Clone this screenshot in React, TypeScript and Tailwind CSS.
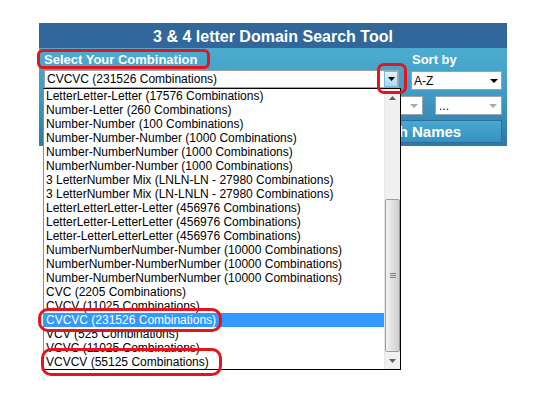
import React from "react";

const items = [
  "LetterLetter-Letter (17576 Combinations)",
  "Number-Letter (260 Combinations)",
  "Number-Number (100 Combinations)",
  "Number-Number-Number (1000 Combinations)",
  "Number-NumberNumber (1000 Combinations)",
  "NumberNumber-Number (1000 Combinations)",
  "3 LetterNumber Mix (LNLN-LN - 27980 Combinations)",
  "3 LetterNumber Mix (LN-LNLN - 27980 Combinations)",
  "LetterLetterLetter-Letter (456976 Combinations)",
  "LetterLetter-LetterLetter (456976 Combinations)",
  "Letter-LetterLetterLetter (456976 Combinations)",
  "NumberNumberNumber-Number (10000 Combinations)",
  "NumberNumber-NumberNumber (10000 Combinations)",
  "Number-NumberNumberNumber (10000 Combinations)",
  "CVC (2205 Combinations)",
  "CVCV (11025 Combinations)",
  "CVCVC (231526 Combinations)",
  "VCV (525 Combinations)",
  "VCVC (11025 Combinations)",
  "VCVCV (55125 Combinations)",
];

function Tri({ color = "#000", w = 8, h = 4 }: { color?: string; w?: number; h?: number }) {
  return (
    <svg width={w} height={h} viewBox={`0 0 ${w} ${h}`}>
      <polygon points={`0,0 ${w},0 ${w / 2},${h}`} fill={color} />
    </svg>
  );
}

export default function App() {
  return (
    <div
      className="relative w-[550px] h-[400px] bg-white overflow-hidden"
      style={{ fontFamily: '"Liberation Sans", Arial, sans-serif' }}
    >
      <div className="pt-[23px] pl-[39px]">
        <div className="w-[468px]">
          {/* header */}
          <div className="h-[25px] bg-[#31679a] flex items-center justify-center text-white font-bold text-[16px] leading-none pt-[2px]">
            3 &amp; 4 letter Domain Search Tool
          </div>
          {/* panel */}
          <div className="h-[98px] bg-gradient-to-b from-[#4caccf] via-[#4099c4] to-[#2f78a6] pl-[5px] pt-[2px]">
            <div className="grid grid-cols-[355px_91px] gap-x-[12px]">
              <div className="text-white font-bold text-[13px] leading-[20px]">Select Your Combination</div>
              <div className="text-white font-bold text-[13px] leading-[20px] pl-px">Sort by</div>
              <div className="h-[18px] bg-white border border-[#9aa4ac] flex items-center">
                <span className="flex-1 pl-[2px] text-[12px] leading-none text-black">CVCVC (231526 Combinations)</span>
                <div className="w-[14px] h-[16px] bg-gradient-to-b from-[#e3f3fd] to-[#a9d6f3] border border-[#7fb6dc] flex items-center justify-center">
                  <Tri w={7} h={4} />
                </div>
              </div>
              <div className="h-[19px] mt-px bg-white border border-[#9aa4ac] flex items-center justify-between pl-[2px] pr-[3px]">
                <span className="text-[12px] leading-none text-black">A-Z</span>
                <Tri w={8} h={4} />
              </div>
            </div>
            <div className="flex justify-end gap-[12px] mt-[6px] pr-[5px]">
              <div className="w-[68px] h-[19px] bg-white border border-[#9aa4ac] flex items-center justify-end pr-[4px]">
                <Tri color="#a8a8a8" w={8} h={4} />
              </div>
              <div className="w-[67px] h-[19px] bg-white border border-[#9aa4ac] flex items-center justify-between pl-[3px] pr-[4px]">
                <span className="text-[12px] leading-none text-black">...</span>
                <Tri color="#a8a8a8" w={8} h={4} />
              </div>
            </div>
            <div className="flex justify-end mt-[5px] pr-[5px]">
              <div className="w-[185px] h-[23px] bg-gradient-to-b from-[#49a9d0] to-[#3591bf] border border-[#2c6f9c] flex items-center justify-center text-white font-bold text-[15px] leading-none">
                Search Names
              </div>
            </div>
          </div>
        </div>
      </div>

      {/* dropdown list overlay */}
      <div className="absolute left-[43px] top-[88px] w-[358px] h-[282px] bg-white border border-black border-l-[#8c8c8c] flex">
        <div className="flex-1 flex flex-col">
          {items.map((t, i) => (
            <div
              key={i}
              className={
                "h-[14px] pl-[2px] text-[12px] leading-[14px] whitespace-nowrap overflow-hidden " +
                (i === 16 ? "bg-[#3399ff] text-white" : "text-black")
              }
            >
              {t}
            </div>
          ))}
        </div>
        <div className="w-[16px] bg-[#f0f0f0] border-l border-[#e6e6e6] flex flex-col items-center">
          <div className="h-[17px] flex items-center justify-center">
            <svg width="7" height="4" viewBox="0 0 7 4">
              <polygon points="0,4 7,4 3.5,0" fill="#606060" />
            </svg>
          </div>
          <div className="h-[93px]" />
          <div className="w-[15px] h-[153px] rounded-[2px] border border-[#9c9c9c] bg-gradient-to-r from-[#f2f2f2] via-[#e0e0e0] to-[#cfcfcf] flex flex-col items-center justify-center gap-[1px]">
            <div className="w-[6px] h-px bg-[#808080]" />
            <div className="w-[6px] h-px bg-[#808080]" />
            <div className="w-[6px] h-px bg-[#808080]" />
          </div>
          <div className="flex-1 flex items-center justify-center">
            <Tri color="#606060" w={7} h={4} />
          </div>
        </div>
      </div>

      {/* red annotations */}
      <div className="absolute left-[37px] top-[49px] w-[173px] h-[20px] border-[3px] border-[#e3141b] rounded-[6px]" />
      <div className="absolute left-[377px] top-[63px] w-[30px] h-[31px] border-[3px] border-[#e3141b] rounded-[7px]" />
      <div className="absolute left-[38px] top-[308px] w-[184px] h-[24px] border-[3px] border-[#e3141b] rounded-[10px]" />
      <div className="absolute left-[41px] top-[348px] w-[181px] h-[28px] border-[3px] border-[#e3141b] rounded-[10px]" />
    </div>
  );
}
